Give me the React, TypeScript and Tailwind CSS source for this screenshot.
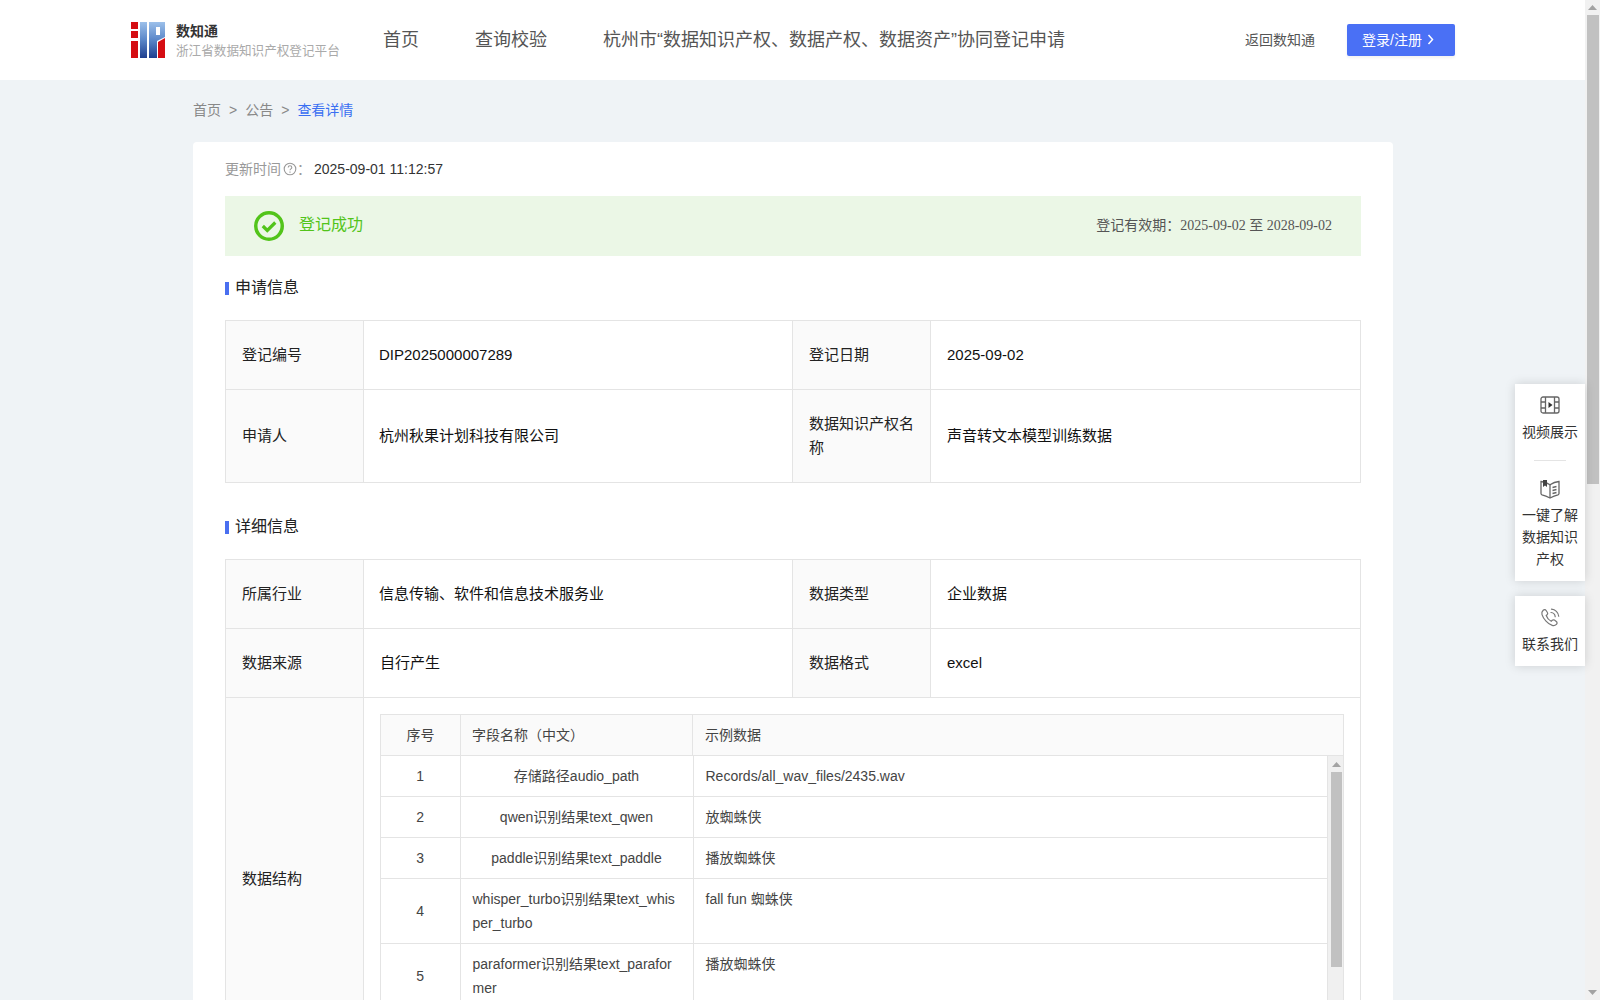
import React from "react";

const sans = "font-['Liberation_Sans','Noto_Sans_CJK_SC',sans-serif]";

function Logo() {
  return (
    <svg width="34" height="36" viewBox="0 0 34 36" className="shrink-0">
      <defs>
        <linearGradient id="lg" x1="0" y1="0" x2="0" y2="1">
          <stop offset="0" stopColor="#9cc0ea" />
          <stop offset="0.5" stopColor="#5a86c8" />
          <stop offset="1" stopColor="#1f3f8f" />
        </linearGradient>
        <linearGradient id="lg2" gradientUnits="userSpaceOnUse" x1="0" y1="0" x2="0" y2="36">
          <stop offset="0" stopColor="#9cc0ea" />
          <stop offset="0.5" stopColor="#5a86c8" />
          <stop offset="1" stopColor="#1f3f8f" />
        </linearGradient>
      </defs>
      <path d="M0 0h7v7H0zM0 9h7v7H0zM0 19h7v17H0z" fill="#d50d12" />
      <rect x="9" y="0" width="7" height="36" fill="url(#lg)" />
      <path d="M18 0h16v15l-8 4v17h-8zM25 5v8h4V5z" fill="url(#lg2)" fillRule="evenodd" />
      <path d="M27 20l7-4v20h-7z" fill="#d50d12" />
    </svg>
  );
}

function Arrow({ down = false }: { down?: boolean }) {
  return (
    <svg width="9" height="5" viewBox="0 0 9 5" className={down ? "rotate-180" : ""}>
      <path d="M4.5 0L9 5H0z" fill="#a3a3a3" />
    </svg>
  );
}

function Heading({ children }: { children: React.ReactNode }) {
  return (
    <div className="flex h-[22px] items-center text-base text-[#222]">
      <span className="mr-[6px] mt-[3px] h-[13px] w-1 bg-[#4a6ff0]" />
      <span className="pt-[2px]">{children}</span>
    </div>
  );
}

const labelCell = "border border-[#e4e4e4] bg-[#fafafa] px-4 py-2 text-left align-middle font-normal text-[#222]";
const valueCell = "border border-[#e4e4e4] px-4 py-2 align-middle text-[#111]";
const valueCellTight = "border border-[#e4e4e4] py-2 pl-[15px] pr-4 align-middle text-[#111]";
const nestCell = "border-b border-r border-[#e4e4e4] px-3 py-2 align-top text-[#444]";

const rows = [
  ["1", "存储路径audio_path", "Records/all_wav_files/2435.wav", true],
  ["2", "qwen识别结果text_qwen", "放蜘蛛侠", true],
  ["3", "paddle识别结果text_paddle", "播放蜘蛛侠", true],
  ["4", "whisper_turbo识别结果text_whisper_turbo", "fall fun 蜘蛛侠", false],
  ["5", "paraformer识别结果text_paraformer", "播放蜘蛛侠", false],
] as const;

function InfoTable({ children }: { children: React.ReactNode }) {
  return (
    <table className="w-[1135px] table-fixed border-collapse text-[15px] leading-6">
      <colgroup>
        <col className="w-[138px]" />
        <col className="w-[429px]" />
        <col className="w-[138px]" />
        <col className="w-[430px]" />
      </colgroup>
      <tbody>{children}</tbody>
    </table>
  );
}

function NestedTable() {
  return (
    <div className="w-[964px] border-l border-r border-t border-[#e4e4e4] text-sm leading-6 text-[#444]">
      <div className="grid h-[41px] grid-cols-[80px_232px_1fr] items-center border-b border-[#e4e4e4] bg-[#fafafa]">
        <div className="flex h-full items-center justify-center border-r border-[#e4e4e4]">序号</div>
        <div className="flex h-full items-center border-r border-[#e4e4e4] pl-[11px]">字段名称（中文）</div>
        <div className="px-3">示例数据</div>
      </div>
      <div className="flex h-[287px] overflow-hidden">
        <table className="w-[947px] shrink-0 table-fixed border-collapse self-start">
          <colgroup>
            <col className="w-[79px]" />
            <col className="w-[233px]" />
            <col />
          </colgroup>
          <tbody>
            {rows.map(([n, name, sample, center]) => (
              <tr key={n}>
                <td className={nestCell + " !align-middle text-center"}>{n}</td>
                <td className={nestCell + " break-all"}>
                  <div className={center ? "flex justify-center" : ""}>{name}</div>
                </td>
                <td className={nestCell}>{sample}</td>
              </tr>
            ))}
          </tbody>
        </table>
        <div className="flex w-[15px] shrink-0 flex-col items-center bg-[#f0f0f0] pl-[1px]">
          <div className="flex h-[16px] items-center justify-center">
            <Arrow />
          </div>
          <div className="h-[195px] w-[11px] bg-[#c1c1c1]" />
        </div>
      </div>
    </div>
  );
}

function FilmIcon() {
  return (
    <svg width="20" height="18" viewBox="0 0 20 18" fill="none" stroke="#666" strokeWidth="1.3">
      <rect x="1" y="1" width="18" height="16" rx="2" />
      <path d="M5.5 1v16M14.5 1v16M1 6h4.500M1 12h4.500M14.500 6H19M14.500 12H19" />
      <path d="M8.500 6l4 3-4 3z" fill="#333" stroke="none" />
    </svg>
  );
}

function BookIcon() {
  return (
    <svg width="20" height="20" viewBox="0 0 20 20" fill="none" stroke="#666" strokeWidth="1.3">
      <path d="M1 2.500c3 .3 6 1.300 9 3.300 3-2 6-3 9-3.300v12c0 .7-.3 1-1 1.300-3 .8-5.500 1.900-8 3.200-2.500-1.300-5-2.400-8-3.200-.7-.3-1-.6-1-1.300z" />
      <path d="M10 5.800V19" />
      <path d="M3 1h4v7L5 6.500 3 8z" fill="#444" stroke="none" />
      <path d="M12.500 8.500l4-1M12.500 11.500l4-1M12.500 14.500l4-1" />
    </svg>
  );
}

function PhoneIcon() {
  return (
    <svg width="20" height="20" viewBox="0 0 20 20" fill="none" stroke="#777" strokeWidth="1.2" strokeLinecap="round">
      <path d="M3.200 2.300c1-.9 2.200-.8 2.900.2l1.300 2c.5.8.4 1.600-.3 2.200l-.9.8c.7 2 2.800 4.700 5 5.700l1-.9c.7-.6 1.500-.7 2.200-.2l1.900 1.400c1 .8 1 2 .1 2.900-1.100 1.100-2.600 1.500-4.200 1C8 16.200 3.300 10.800 2 6.600 1.500 5 2 3.400 3.200 2.300z" />
      <path d="M11 4.500c2.200.2 4 2 4.200 4.200M11.500 1.200c3.800.3 6.800 3.300 7.200 7" />
    </svg>
  );
}

function SideWidget() {
  return (
    <div className="absolute right-[15px] top-[384px] flex w-[70px] flex-col gap-[15px] text-center text-sm leading-[22px] text-[#333]">
      <div className="flex h-[197px] flex-col items-center bg-white pt-3 shadow-[0_0_10px_rgba(0,0,0,0.15)]">
        <FilmIcon />
        <div className="mt-[7px] whitespace-nowrap">视频展示</div>
        <div className="mb-[18px] mt-[17px] h-px w-8 bg-[#e4e4e4]" />
        <BookIcon />
        <div className="mt-[5px] w-[58px]">一键了解数据知识产权</div>
      </div>
      <div className="flex h-[70px] flex-col items-center bg-white pt-3 shadow-[0_0_10px_rgba(0,0,0,0.15)]">
        <PhoneIcon />
        <div className="mt-[5px] whitespace-nowrap">联系我们</div>
      </div>
    </div>
  );
}

export default function App() {
  return (
    <div className={`${sans} relative flex h-[1000px] w-[1600px] overflow-hidden bg-[#eff3f6]`}>
      <div className="flex w-[1585px] flex-col">
        <header className="flex h-20 shrink-0 items-center bg-white pl-[131px] pr-[130px]">
          <Logo />
          <div className="mb-[2px] ml-[11px] w-[207px] pt-[2px]">
            <div className="text-sm font-bold leading-[22px] text-[#333]">数知通</div>
            <div className="text-[12.6px] leading-[19px] text-[#aaa]">浙江省数据知识产权登记平台</div>
          </div>
          <nav className="flex gap-14 text-lg text-[#555]">
            <span>首页</span>
            <span>查询校验</span>
            <span>杭州市“数据知识产权、数据产权、数据资产”协同登记申请</span>
          </nav>
          <span className="ml-auto mr-8 text-sm text-[#555]">返回数知通</span>
          <button className="flex h-8 w-[108px] items-center gap-[5px] rounded-[2px] bg-[#4a70f5] pb-[1px] pl-[15px] text-sm text-white shadow-[0_2px_3px_rgba(0,0,0,0.06)]">
            登录/注册
            <svg width="7" height="11" viewBox="0 0 7 11" fill="none" stroke="white" strokeWidth="1.5">
              <path d="M1.500 1l4 4.500-4 4.500" />
            </svg>
          </button>
        </header>

        <main className="ml-[193px] w-[1200px]">
          <div className="mb-[2px] flex h-[60px] items-center gap-[8px] text-sm text-[#888]">
            <span>首页</span>
            <span>&gt;</span>
            <span>公告</span>
            <span>&gt;</span>
            <span className="text-[#3a6ff2]">查看详情</span>
          </div>

          <section className="rounded-t-[4px] bg-white px-8 pt-4">
            <div className="flex h-[22px] items-center text-sm">
              <span className="text-[#999]">更新时间</span>
              <svg width="14" height="14" viewBox="0 0 14 14" fill="none" stroke="#999" strokeWidth="1.100" className="ml-[2px]">
                <circle cx="7" cy="7" r="5.800" />
                <path d="M5.200 5.500c0-2.300 3.600-2.300 3.600 0 0 1.400-1.800 1.300-1.800 2.800M7 9.600v1.100" />
              </svg>
              <span className="text-[#999]">：</span>
              <span className="ml-[3px] text-[#333]">2025-09-01 11:12:57</span>
            </div>

            <div className="mb-5 mt-4 flex h-[60px] items-center bg-[#ebf7e6] pl-[29px] pr-[29px]">
              <svg width="30" height="30" viewBox="0 0 30 30" fill="none" stroke="#52c41a">
                <circle cx="15" cy="15" r="13.250" strokeWidth="3.500" />
                <path d="M8.800 15l4.500 4.500 8-8" strokeWidth="3.200" />
              </svg>
              <span className="mb-[2px] ml-[15px] text-base text-[#52c41a]">登记成功</span>
              <span className="mb-[2px] ml-auto text-sm text-[#555]">
                登记有效期：<span className="font-['Liberation_Serif','Noto_Sans_CJK_SC',serif]">2025-09-02 至 2028-09-02</span>
              </span>
            </div>

            <div className="mb-[22px]">
              <Heading>申请信息</Heading>
            </div>
            <InfoTable>
              <tr className="h-[69px]">
                <th className={labelCell}>登记编号</th>
                <td className={valueCellTight}>DIP2025000007289</td>
                <th className={labelCell}>登记日期</th>
                <td className={valueCell}>2025-09-02</td>
              </tr>
              <tr className="h-[93px]">
                <th className={labelCell}>申请人</th>
                <td className={valueCellTight}>杭州秋果计划科技有限公司</td>
                <th className={labelCell}>数据知识产权名称</th>
                <td className={valueCell}>声音转文本模型训练数据</td>
              </tr>
            </InfoTable>

            <div className="mb-[22px] mt-8">
              <Heading>详细信息</Heading>
            </div>
            <InfoTable>
              <tr className="h-[69px]">
                <th className={labelCell}>所属行业</th>
                <td className={valueCellTight}>信息传输、软件和信息技术服务业</td>
                <th className={labelCell}>数据类型</th>
                <td className={valueCell}>企业数据</td>
              </tr>
              <tr className="h-[69px]">
                <th className={labelCell}>数据来源</th>
                <td className={valueCell}>自行产生</td>
                <th className={labelCell}>数据格式</th>
                <td className={valueCell}>excel</td>
              </tr>
              <tr className="h-[360px]">
                <th className={labelCell}>数据结构</th>
                <td colSpan={3} className="border border-[#e4e4e4] p-4">
                  <NestedTable />
                </td>
              </tr>
            </InfoTable>
          </section>
        </main>
      </div>

      <div className="flex h-[1000px] w-[15px] shrink-0 flex-col items-center bg-[#f1f1f1]">
        <div className="flex h-[15px] items-center justify-center">
          <Arrow />
        </div>
        <div className="h-[469px] w-[12px] bg-[#c1c1c1]" />
        <div className="mt-auto flex h-[15px] items-center justify-center">
          <Arrow down />
        </div>
      </div>

      <SideWidget />
    </div>
  );
}
